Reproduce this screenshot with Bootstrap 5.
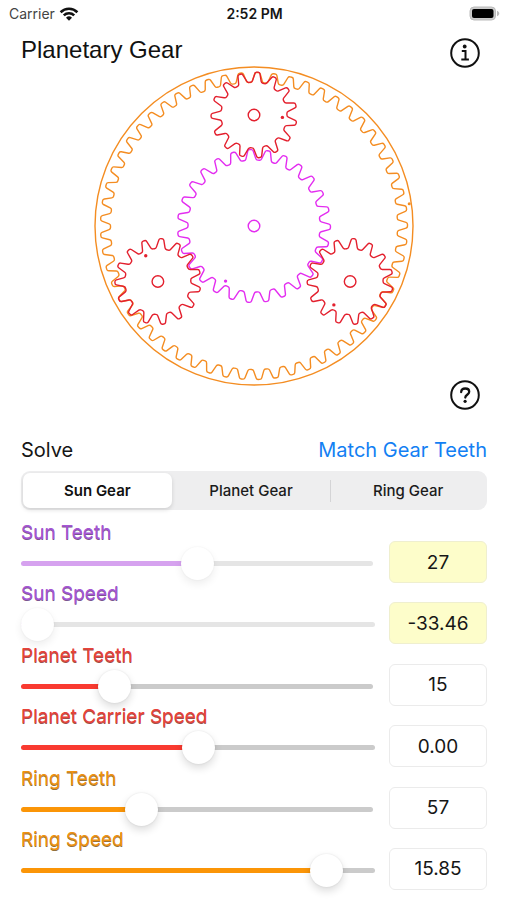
<!DOCTYPE html>
<html lang="en">
<head>
<meta charset="utf-8">
<meta name="viewport" content="width=device-width, initial-scale=1">
<title>Planetary Gear</title>
<link href="https://cdn.jsdelivr.net/npm/bootstrap@5.3.0/dist/css/bootstrap.min.css" rel="stylesheet">
<style>
  body { font-family: Inter, "Liberation Sans", sans-serif; color: #161616; background: #fff; }
  .status-bar { display: grid; grid-template-columns: 1fr auto 1fr; height: 27px; padding: 0 7px 0 9px; font-size: 14px; line-height: 27px; }
  .status-carrier { color: #444; }
  .stage { display: grid; height: 385px; padding: 0 26px 0 21px; }
  .stage > * { grid-area: 1 / 1; }
  .stage h1 { font: 400 24px/32px "Liberation Sans", Arial, sans-serif; color: #111; margin: 7px 0 0; }
  .gear-wrap { margin: 39px -5px 0 0; }
  .round-btn { width: 32px; height: 32px; line-height: 0; color: #111; }
  .round-btn.info-btn { margin-top: 10px; }
  .side { padding-left: 21px; padding-right: 20px; }
  .solve-row { font-size: 20px; line-height: 28px; margin-top: 24px; }
  .match-btn { font-size: 20px; line-height: 28px; color: #137ff3; }
  .segments { background: #eeeeef; border-radius: 9px; height: 39px; padding: 2px; margin-top: 7px; }
  .segments .seg { flex: 31 1 0; border: 0; border-radius: 7px; padding: 0; font-size: 15px; font-weight: 500; line-height: 35px; color: #1b1b1b; background: none; }
  .segments .seg:first-of-type { flex-grow: 30; }
  .segments .seg.middle { flex-grow: 32; }
  .segments .btn-check:checked + .seg { background: #fff; color: #111; font-weight: 600; box-shadow: 0 2px 4px rgba(0,0,0,.13); }
  .seg-line { width: 1px; height: 22px; background: #d4d4d6; }
  .controls { padding-top: 13px; padding-bottom: 10px; }
  .control { display: grid; grid-template-columns: 1fr 98px; column-gap: 14px; height: 60px; align-items: end; }
  .control .slot { height: 60px; }
  .control label { display: block; font-size: 19px; line-height: 20px; color: var(--ink); text-shadow: 0 1px 0 var(--shade); }
  .sun { --ink: #a656d4; --shade: #7a5490; --fill: #d6a2ef; --rest: #e5e5e5; }
  .planet { --ink: #e8433a; --shade: #9c504c; --fill: #f93a30; --rest: #cbcbcb; }
  .ring { --ink: #ee9212; --shade: #94713c; --fill: #fb9507; --rest: #cbcbcb; }
  .slider { appearance: none; -webkit-appearance: none; display: block; height: 33px; margin: 4px 0 0; background: none; width: 100%; }
  .slider.short { width: calc(100% - 2px); }
  .slider::-webkit-slider-runnable-track { height: 5px; border-radius: 3px; background: linear-gradient(to right, var(--fill) var(--at), var(--rest) var(--at)); }
  .slider::-webkit-slider-thumb { -webkit-appearance: none; width: 33px; height: 33px; margin-top: -14px; border: 0; border-radius: 50%; background: #fff; box-shadow: 0 4px 8px rgba(0,0,0,.14), 0 0 2px rgba(0,0,0,.1); }
  .sun .slider::-webkit-slider-thumb { box-shadow: 0 4px 8px rgba(0,0,0,.07), 0 0 2px rgba(0,0,0,.06); }
  .value { width: 98px; height: 42px; border: 1px solid #ebebeb; border-radius: 6px; padding: 0; text-align: center; font-size: 19px; color: #161616; background: #fff; }
  .sun .value { background: #fdfdca; border-color: #efefcf; }
</style>
</head>
<body>
<div class="d-flex flex-column min-vh-100">
  <header class="status-bar">
    <div class="status-carrier d-flex align-items-center">Carrier
      <svg class="ms-1" width="20" height="16" viewBox="0 0 20 16" fill="none" stroke="#111" stroke-width="2.6" aria-hidden="true">
        <path d="M1.6 6.2a12 12 0 0 1 16.8 0M4.8 9.4a7.5 7.5 0 0 1 10.4 0"/><path d="M10 14.8l-3-3a4.3 4.3 0 0 1 6 0z" fill="#111" stroke="none"/>
      </svg>
    </div>
    <div class="fw-semibold">2:52 PM</div>
    <div class="d-flex justify-content-end align-items-center">
      <svg width="31" height="15" viewBox="0 0 31 15" aria-hidden="true">
        <rect x="1" y="1" width="25.5" height="13" rx="4" fill="#ccc" stroke="#bbb"/><rect x="3" y="3" width="21.5" height="9" rx="2" fill="#000"/><path d="M28 4.8c3 1 3 4.4 0 5.4z" fill="#bbb"/>
      </svg>
    </div>
  </header>

  <section class="stage">
    <h1>Planetary Gear</h1>
    <div class="gear-wrap text-center">
      <svg id="gears" width="320" height="320" viewBox="0 0 320 320" fill="none" stroke-width="1.4" stroke-linejoin="round" role="img" aria-label="Gear train"></svg>
    </div>
    <button class="round-btn info-btn btn p-0 border-0 ms-auto" type="button" aria-label="Information">
      <svg width="32" height="32" viewBox="0 0 32 32" fill="none" stroke="currentColor" stroke-width="2"><circle cx="16" cy="16" r="13.8"/><circle cx="15.7" cy="9.5" r="1.9" fill="currentColor" stroke="none"/><path d="M12.8 14h3.7v8.2M12.3 22.5h7.6"/></svg>
    </button>
    <button class="round-btn btn p-0 border-0 ms-auto align-self-end" type="button" aria-label="Help">
      <svg width="32" height="32" viewBox="0 0 32 32" fill="none" stroke="currentColor" stroke-width="2"><circle cx="16" cy="15" r="13.8"/><path d="M12.2 12c.1-2.2 1.7-3.5 4-3.5s4 1.3 4 3.3c0 2.9-3.9 3-3.9 5.7" stroke-width="2.3" stroke-linecap="round"/><circle cx="16.1" cy="21.3" r="1.6" fill="currentColor" stroke="none"/></svg>
    </button>
  </section>

  <main class="side d-flex flex-column flex-grow-1">
    <div class="solve-row d-flex justify-content-between align-items-center">
      <span id="solve">Solve</span>
      <button class="match-btn btn p-0 border-0" type="button">Match Gear Teeth</button>
    </div>
    <div class="segments d-flex align-items-center" role="group" aria-labelledby="solve">
      <input class="btn-check" type="radio" name="solve" id="seg-sun" checked><label class="btn seg" for="seg-sun">Sun Gear</label>
      <input class="btn-check" type="radio" name="solve" id="seg-planet"><label class="btn seg middle" for="seg-planet">Planet Gear</label>
      <span class="seg-line"></span>
      <input class="btn-check" type="radio" name="solve" id="seg-ring"><label class="btn seg" for="seg-ring">Ring Gear</label>
    </div>

    <div class="controls d-flex flex-column justify-content-between flex-grow-1">
      <div class="control sun">
        <div class="slot"><label for="sun-teeth">Sun Teeth</label><input class="slider short" id="sun-teeth" type="range" min="0" max="1000" value="503" style="--at:50%"></div>
        <input class="value" type="text" value="27" aria-label="Sun teeth value">
      </div>
      <div class="control sun">
        <div class="slot"><label for="sun-speed">Sun Speed</label><input class="slider" id="sun-speed" type="range" min="0" max="1000" value="0" style="--at:4%"></div>
        <input class="value" type="text" value="-33.46" aria-label="Sun speed value">
      </div>
      <div class="control planet">
        <div class="slot"><label for="planet-teeth">Planet Teeth</label><input class="slider short" id="planet-teeth" type="range" min="0" max="1000" value="240" style="--at:26%"></div>
        <input class="value" type="text" value="15" aria-label="Planet teeth value">
      </div>
      <div class="control planet">
        <div class="slot"><label for="carrier-speed">Planet Carrier Speed</label><input class="slider" id="carrier-speed" type="range" min="0" max="1000" value="503" style="--at:50%"></div>
        <input class="value" type="text" value="0.00" aria-label="Planet carrier speed value">
      </div>
      <div class="control ring">
        <div class="slot"><label for="ring-teeth">Ring Teeth</label><input class="slider short" id="ring-teeth" type="range" min="0" max="1000" value="327" style="--at:34%"></div>
        <input class="value" type="text" value="57" aria-label="Ring teeth value">
      </div>
      <div class="control ring">
        <div class="slot"><label for="ring-speed">Ring Speed</label><input class="slider" id="ring-speed" type="range" min="0" max="1000" value="900" style="--at:86%"></div>
        <input class="value" type="text" value="15.85" aria-label="Ring speed value">
      </div>
    </div>
  </main>
</div>
<script src="https://cdn.jsdelivr.net/npm/bootstrap@5.3.0/dist/js/bootstrap.bundle.min.js"></script>
<script>
  // Closed tooth profile with rounded corners; angles in degrees, clockwise from the right.
  function profile(cx, cy, teeth, root, tip, phase, tipHalf, rootHalf) {
    const pitch = 360 / teeth, pts = [];
    const at = (r, a) => [cx + r * Math.cos(a * Math.PI / 180), cy + r * Math.sin(a * Math.PI / 180)];
    for (let i = 0; i < teeth; i++) {
      const a = phase + i * pitch;
      pts.push(at(root, a - rootHalf * pitch), at(tip, a - tipHalf * pitch), at(tip, a + tipHalf * pitch), at(root, a + rootHalf * pitch));
    }
    const toward = (p, q, d) => {
      const l = Math.hypot(q[0] - p[0], q[1] - p[1]), k = Math.min(d / l, .5);
      return [p[0] + (q[0] - p[0]) * k, p[1] + (q[1] - p[1]) * k];
    };
    const f = p => p[0].toFixed(2) + ' ' + p[1].toFixed(2);
    return pts.map((p, i) => {
      const prev = pts[(i + pts.length - 1) % pts.length], next = pts[(i + 1) % pts.length];
      return (i ? 'L' : 'M') + f(toward(p, prev, 1.5)) + 'Q' + f(p) + ' ' + f(toward(p, next, 1.5));
    }).join('') + 'Z';
  }
  const dot = (cx, cy, r, a, color, size) =>
    `<circle cx="${cx + r * Math.cos(a * Math.PI / 180)}" cy="${cy + r * Math.sin(a * Math.PI / 180)}" r="${size}" fill="${color}"/>`;
  const orange = '#f48d22', magenta = '#e32df0', red = '#e3202e';
  let out = `<circle cx="160" cy="160" r="159" stroke="${orange}"/>`
    + `<path d="${profile(160, 160, 57, 143.5, 153.5, -6.6, .14, .35)}" stroke="${orange}"/>` + dot(160, 160, 156.8, -8.2, orange, 1.5)
    + `<path d="${profile(160, 160, 27, 66, 76.5, .65, .13, .35)}" stroke="${magenta}"/>`
    + `<circle cx="160" cy="160" r="5.8" stroke="${magenta}"/>` + dot(160, 160, 62, 117.3, magenta, 1.7);
  [-90, 30, 150].forEach((place, i) => {
    const x = 160 + 111 * Math.cos(place * Math.PI / 180), y = 160 + 111 * Math.sin(place * Math.PI / 180);
    out += `<path d="${profile(x, y, 15, 33, 43, 10.8, .12, .34)}" stroke="${red}"/><circle cx="${x}" cy="${y}" r="5.8" stroke="${red}"/>`
      + dot(x, y, 28.5, 4.8 + 120 * i, red, 1.7);
  });
  document.getElementById('gears').innerHTML = out;
</script>
</body>
</html>
